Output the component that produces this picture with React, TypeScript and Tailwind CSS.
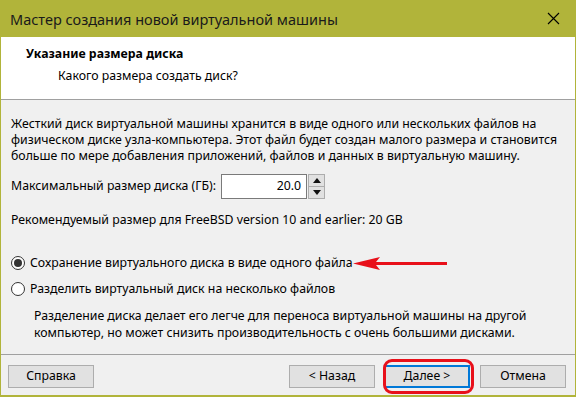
const font = "font-['Noto_Sans',sans-serif]";

function Radio({ checked, label }: { checked?: boolean; label: string }) {
  return (
    <div className="flex h-4 items-center">
      <span className="ml-[10px] flex h-[14px] w-[14px] items-center justify-center rounded-full border border-[#333] bg-white">
        {checked && <span className="h-[8px] w-[8px] rounded-full bg-[#333]" />}
      </span>
      <span className="ml-[5px]">{label}</span>
    </div>
  );
}

function Btn({ children, focused }: { children: string; focused?: boolean }) {
  return (
    <button
      className={`h-[23px] w-[86px] border bg-[#e1e1e1] text-[12.3px] text-black ${
        focused ? "border-2 border-[#0078d7]" : "border-[#adadad]"
      }`}
    >
      {children}
    </button>
  );
}

const intro = [
  "Жесткий диск виртуальной машины хранится в виде одного или нескольких файлов на",
  "физическом диске узла-компьютера. Этот файл будет создан малого размера и становится",
  "больше по мере добавления приложений, файлов и данных в виртуальную машину.",
];

const splitNote = [
  "Разделение диска делает его легче для переноса виртуальной машины на другой",
  "компьютер, но может снизить производительность с очень большими дисками.",
];

export default function App() {
  return (
    <div className={`relative flex h-[397px] w-[576px] flex-col bg-[#b1b43a] px-px pb-[2px] ${font} text-[12.3px] text-black`}>
      {/* title bar */}
      <div className="flex h-[37px] shrink-0 items-center justify-between pl-[9px] pr-[15px]">
        <span className="pt-[2px] text-[14.5px] text-[#1a1a1a]">Мастер создания новой виртуальной машины</span>
        <svg width="13" height="13" viewBox="0 0 13 13" className="text-black">
          <path d="M1 1L12 12M12 1L1 12" stroke="currentColor" strokeWidth="1.1" />
        </svg>
      </div>

      {/* header */}
      <div className="h-[63px] shrink-0 border-b border-[#a0a0a0] bg-white pl-[25px] pt-[9px]">
        <div className="font-bold leading-[16px]">Указание размера диска</div>
        <div className="mt-[6px] pl-[32px] leading-[16px]">Какого размера создать диск?</div>
      </div>

      {/* body */}
      <div className="flex-1 bg-[#f0f0f0] pt-[16px]">
        <div className="pl-[10px] leading-[16px]">
          {intro.map((l) => (
            <div key={l} className="whitespace-nowrap">{l}</div>
          ))}
        </div>

        <div className="mt-[10px] flex items-center pl-[10px]">
          <span>Максимальный размер диска (ГБ):</span>
          <div className="ml-[5px] flex h-[25px] w-[86px] items-center justify-end border border-[#7a7a7a] bg-white pr-[5px]">
            20.0
          </div>
          <div className="ml-px flex h-[25px] w-[17px] flex-col">
            <div className="flex flex-1 items-center justify-center border border-[#adadad] bg-[#e1e1e1]">
              <svg width="8" height="5" viewBox="0 0 8 5">
                <path d="M0 5L4 0L8 5Z" fill="#111" />
              </svg>
            </div>
            <div className="flex flex-1 items-center justify-center border border-t-0 border-[#adadad] bg-[#e1e1e1]">
              <svg width="8" height="5" viewBox="0 0 8 5">
                <path d="M0 0L8 0L4 5Z" fill="#111" />
              </svg>
            </div>
          </div>
        </div>

        <div className="mt-[13px] pl-[10px] leading-[16px]">
          Рекомендуемый размер для FreeBSD version 10 and earlier: 20 GB
        </div>

        <div className="mt-[27px]">
          <Radio checked label="Сохранение виртуального диска в виде одного файла" />
        </div>
        <div className="mt-[10px]">
          <Radio label="Разделить виртуальный диск на несколько файлов" />
        </div>
        <div className="mt-[10px] pl-[33px] leading-[17px]">
          {splitNote.map((l) => (
            <div key={l} className="whitespace-nowrap">{l}</div>
          ))}
        </div>
      </div>

      {/* footer */}
      <div className="flex h-[41px] shrink-0 items-start border-t border-[#a0a0a0] bg-[#f0f0f0] pl-[7px] pr-[9px] pt-[10px]">
        <Btn>Справка</Btn>
        <div className="flex-1" />
        <Btn>{"< Назад"}</Btn>
        <div className="ml-[9px]">
          <Btn focused>{"Далее >"}</Btn>
        </div>
        <div className="ml-[10px]">
          <Btn>Отмена</Btn>
        </div>
      </div>

      {/* annotation: arrow */}
      <svg className="absolute left-[352px] top-[256px]" width="96" height="15" viewBox="0 0 96 15">
        <path d="M1 7.5L28 1L24 6H95V9H24L28 14Z" fill="#e8101a" />
      </svg>

      {/* annotation: highlight round the Next button */}
      <div className="absolute left-[383px] top-[359px] h-[35px] w-[91px] rounded-[9px] border-[3px] border-[#e8101a]" />
    </div>
  );
}
